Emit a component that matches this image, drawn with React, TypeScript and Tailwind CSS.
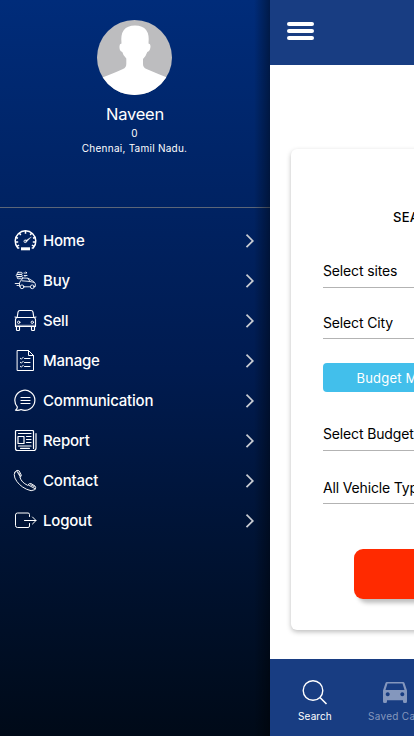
import React from 'react';

const svgProps = {
  width: 24,
  height: 24,
  viewBox: '0 0 24 24',
  fill: 'none',
  stroke: 'white',
  strokeWidth: 1,
  strokeLinecap: 'round' as const,
  strokeLinejoin: 'round' as const,
  className: 'mb-px shrink-0',
};

const HomeIcon = () => (
  <svg {...svgProps} strokeLinecap="butt">
    <path d="M6.300 20H4.800A10.300 10.300 0 1 1 20.200 20H18.700" strokeWidth="1.500" />
    <path d="M12.500 2.500v3.200M6.200 5l1.600 2M18.800 5l-1.600 2M2.600 9.300l2.400.9M22.400 9.300l-2.400.9M2 14h3.200M23 14h-3.200M3.800 18.400l2.300-1.200M21.200 18.400l-2.300-1.200" strokeWidth="1.500" />
    <path d="M12 13l6.500-4.200-4.800 5z" fill="white" strokeWidth=".3" />
    <circle cx="12.300" cy="13.300" r="1.300" strokeWidth=".9" />
    <path d="M8 20.800h9" strokeWidth="3" />
  </svg>
);

const BuyIcon = () => (
  <svg {...svgProps} strokeWidth=".9">
    <rect x="4.200" y="4.300" width="5" height="2" rx="1" />
    <rect x="3.200" y="6.500" width="6" height="2" rx="1" />
    <rect x="4.200" y="8.700" width="5.500" height="2" rx="1" />
    <path d="M11 5h3l-1-1M14 7.500h-3l1 1M2.200 15.500h3.500M4 17.500h1.500M8 12.500l2-2.500 5 .2 5.500 3.300 1.800 2.300v2.800h-1.500M17 18.800h-6M9 12.800l6 .5 6 1M7.500 13l-1 2v3.500H7M15 10.500l2 3" />
    <circle cx="9" cy="18.800" r="1.900" />
    <circle cx="19.300" cy="18.800" r="1.900" />
  </svg>
);

const SellIcon = () => (
  <svg {...svgProps}>
    <path d="M4.200 9.500 5 4.200Q5.300 2.500 7 2.500H18q1.700 0 2 1.700l.8 5.300M4.200 9.500h16.600q1.700.5 1.700 2V18.500H2.500v-7q0-1.500 1.700-2zM2 9l2 .5M23 9l-2 .5M3.500 18.700v3q0 .8.800.8h1.400q.8 0 .8-.8v-3M18.500 18.700v3q0 .8.800.8h1.400q.8 0 .8-.8v-3" strokeWidth="1.150" />
    <path d="M2.500 17.300h20" strokeWidth="1" opacity=".7" />
    <circle cx="5.700" cy="14.300" r="1.200" />
    <circle cx="19.300" cy="14.300" r="1.200" />
  </svg>
);

const ManageIcon = () => (
  <svg {...svgProps}>
    <path d="M4.500 2.500H15.500L20.500 7.500V22.500H4.500zM15.500 2.500v5h5M11.500 10.500h5.500M11.500 14.500h5.500M11.500 18.500h5.500M7.300 10.200l1 1 2-2M7.300 14.200l1 1 2-2M7.300 18.200l1 1 2-2" />
  </svg>
);

const ChatIcon = () => (
  <svg {...svgProps}>
    <path d="M4.300 18.800A10 10 0 1 1 8 21.500C6.500 22.300 4.500 22.500 2.500 22.200 4 21.200 4.500 20.200 4.300 18.800z" strokeWidth="1.200" />
    <path d="M8 9.500h9M8 12.500h9M8 15.500h9" strokeWidth="1.200" />
  </svg>
);

const ReportIcon = () => (
  <svg {...svgProps} strokeWidth="1.200">
    <path d="M20.500 20.500V3.500q0-1-1-1H3.500q-1 0-1 1v17q0 2 2 2H20.500q2.500 0 2.500-2.500V5.500M5.500 5.500h12.500" />
    <path d="M5 8.500h6v7h-6zM13.500 8.500h4.500M13.500 11.500h4.500M13.500 14.500h4.500M5.500 18h12.500M7.500 20.300h9" />
  </svg>
);

const PhoneIcon = () => (
  <svg {...svgProps} strokeWidth=".95">
    <path d="M1.900 4.100Q4.200 1.200 6.100 2.800L8.200 6.900Q8.700 8.400 6.900 9.200 8.500 14.500 14.600 17.300 16 15.200 17.900 15.500L22 18Q23.500 19.600 21.800 21.700 18.500 24 13.500 21.200 5.200 17.300 1.900 10 .5 6.100 1.900 4.100zM3.800 3l3.500 6M5.800 4.800l1.500 3M15.500 17.100l6.800 3.700M17.700 16.800l3.500 1.800" />
  </svg>
);

const LogoutIcon = () => (
  <svg {...svgProps}>
    <path d="M16.500 8.500v-2q0-1.500-1.500-1.500H4.500Q2.500 5 2.500 7v10.500Q2.500 19.500 4.500 19.500H15q1.500 0 1.500-1.500v-2.500M11.500 12.500H23M19.500 9l3.500 3.500-3.500 3.500" />
  </svg>
);

const items = [
  { label: 'Home', Icon: HomeIcon },
  { label: 'Buy', Icon: BuyIcon },
  { label: 'Sell', Icon: SellIcon },
  { label: 'Manage', Icon: ManageIcon },
  { label: 'Communication', Icon: ChatIcon },
  { label: 'Report', Icon: ReportIcon },
  { label: 'Contact', Icon: PhoneIcon },
  { label: 'Logout', Icon: LogoutIcon },
];

function Drawer() {
  return (
    <aside className="relative flex w-[270px] shrink-0 flex-col bg-linear-to-b from-[#002c7a] via-[#001b50] to-[#000a18] text-white">
      <header className="flex h-[208px] w-[269px] flex-col items-center pt-5">
        <svg width="75" height="75" viewBox="0 0 75 75" className="shrink-0">
          <defs>
            <clipPath id="avatar"><circle cx="37.500" cy="37.500" r="37.500" /></clipPath>
          </defs>
          <g clipPath="url(#avatar)">
            <rect width="75" height="75" fill="#bdbdbf" />
            <path d="M0 59.500Q15 54 26 49Q29.300 47.500 29.300 44V38.500Q26 35.500 25.300 32Q22 31 22.500 26Q22.500 23.500 24.500 23.500Q22.500 5.500 38 5.500Q53.500 5.500 51.500 23.500Q53.500 23.500 53.500 26Q53.500 31 50.300 32Q49 36 46 39V44Q46 47.500 49.500 49Q61 54 75 59.500V75H0z" fill="white" />
          </g>
        </svg>
        <h1 className="mt-[9px] ml-px text-[16.500px] leading-5 tracking-[-0.25px]">Naveen</h1>
        <p className="mt-[3px] text-[10px] leading-[13px]">0</p>
        <p className="mt-px text-[10px] leading-[15px] tracking-[0.25px]">Chennai, Tamil Nadu.</p>
      </header>
      <nav className="-mt-px flex flex-col border-t border-[#5c6678] pt-3">
        {items.map(({ label, Icon }) => (
          <a key={label} className="flex h-10 items-center pr-[14px] pl-[13px]">
            <Icon />
            <span className="ml-1.5 grow pt-px text-[15px] leading-5 font-medium tracking-[-0.2px]">{label}</span>
            <svg width="12" height="16" viewBox="0 0 12 16" fill="none" stroke="#c8ccd2" strokeWidth="1.700">
              <path d="M2.500 2.700 8.800 8.900 2.500 15.100" />
            </svg>
          </a>
        ))}
      </nav>
      <div className="absolute inset-y-0 right-0 w-4 bg-linear-to-r from-transparent to-black/40" />
    </aside>
  );
}

function Field({ label, className }: { label: string; className: string }) {
  return (
    <div className={`w-[200px] border-b border-[#b3b3b3] text-[14px] leading-5 tracking-[-0.15px] whitespace-nowrap text-black ${className}`}>
      {label}
    </div>
  );
}

function SearchPage() {
  return (
    <main className="flex w-36 shrink-0 flex-col overflow-hidden bg-white">
      <header className="h-[65px] shrink-0 bg-[#183d82] pt-[22px] pl-[17px]">
        <div className="flex w-[27px] flex-col gap-[3px]">
          <i className="h-1 rounded-full bg-white" />
          <i className="h-1 rounded-full bg-white" />
          <i className="h-1 rounded-full bg-white" />
        </div>
      </header>
      <div className="grow pt-[84px] pl-[21px]">
        <section className="flex h-[481px] w-[320px] flex-col rounded-md bg-white pl-8 shadow-[0_2px_5px_rgba(0,0,0,0.26)]">
          <h2 className="mt-[58px] ml-[70px] text-[13px] leading-5 font-medium tracking-[0.3px] text-black">SEARCH</h2>
          <Field label="Select sites" className="mt-[34px] h-[27px]" />
          <Field label="Select City" className="mt-[25px] h-[26px]" />
          <button className="mt-6 flex h-[29px] w-[200px] shrink-0 items-center rounded-sm bg-[#42bfeb] pt-0.5 pl-[33.500px] text-[13px] tracking-[0.2px] whitespace-nowrap text-white">
            Budget Model
          </button>
          <Field label="Select Budget" className="mt-8 h-[27px]" />
          <Field label="All Vehicle Type" className="mt-[27px] h-[26px]" />
          <button aria-label="Search" className="mt-[45px] ml-[31px] h-[50px] w-[200px] rounded-[9px] bg-[#ff2a00] shadow-[4px_4px_4px_rgba(0,0,0,0.25)]" />
        </section>
      </div>
      <nav className="flex h-[77px] shrink-0 bg-[#183d82] text-[10px] leading-3 whitespace-nowrap text-white">
        <div className="flex w-[90px] shrink-0 flex-col items-center pt-5">
          <svg width="28" height="28" viewBox="0 0 28 28" fill="none" stroke="white" strokeWidth="1.400">
            <circle cx="12" cy="11.500" r="9.800" />
            <path d="M19 18.500 25.500 25" strokeWidth="1.600" />
          </svg>
          <span className="mt-[3px] tracking-[0.1px]">Search</span>
        </div>
        <div className="flex w-[70px] shrink-0 flex-col items-center pt-5 text-[#8497bd]">
          <svg width="26" height="28" viewBox="0 0 26 28" fill="currentColor">
            <path fillRule="evenodd" d="M5 3H21Q22.200 3 22.500 4L25 11.500V22.500Q25 24 23.500 24H22.500Q21 24 21 22.500V21.300H5V22.500Q5 24 3.500 24H2.500Q1 24 1 22.500V11.500L3.500 4Q3.800 3 5 3zM5.500 4.500 3.500 11H22.500L20.500 4.500zM5.700 13.300a2 2 0 1 0 .01 0zM20.300 13.300a2 2 0 1 0 .01 0z" />
          </svg>
          <span className="mt-[3px] ml-[3px] tracking-[0.3px]">Saved Cars</span>
        </div>
      </nav>
    </main>
  );
}

export default function App() {
  return (
    <div className="flex h-[736px] w-[414px] overflow-hidden font-['Inter','Liberation_Sans',sans-serif]">
      <Drawer />
      <SearchPage />
    </div>
  );
}
